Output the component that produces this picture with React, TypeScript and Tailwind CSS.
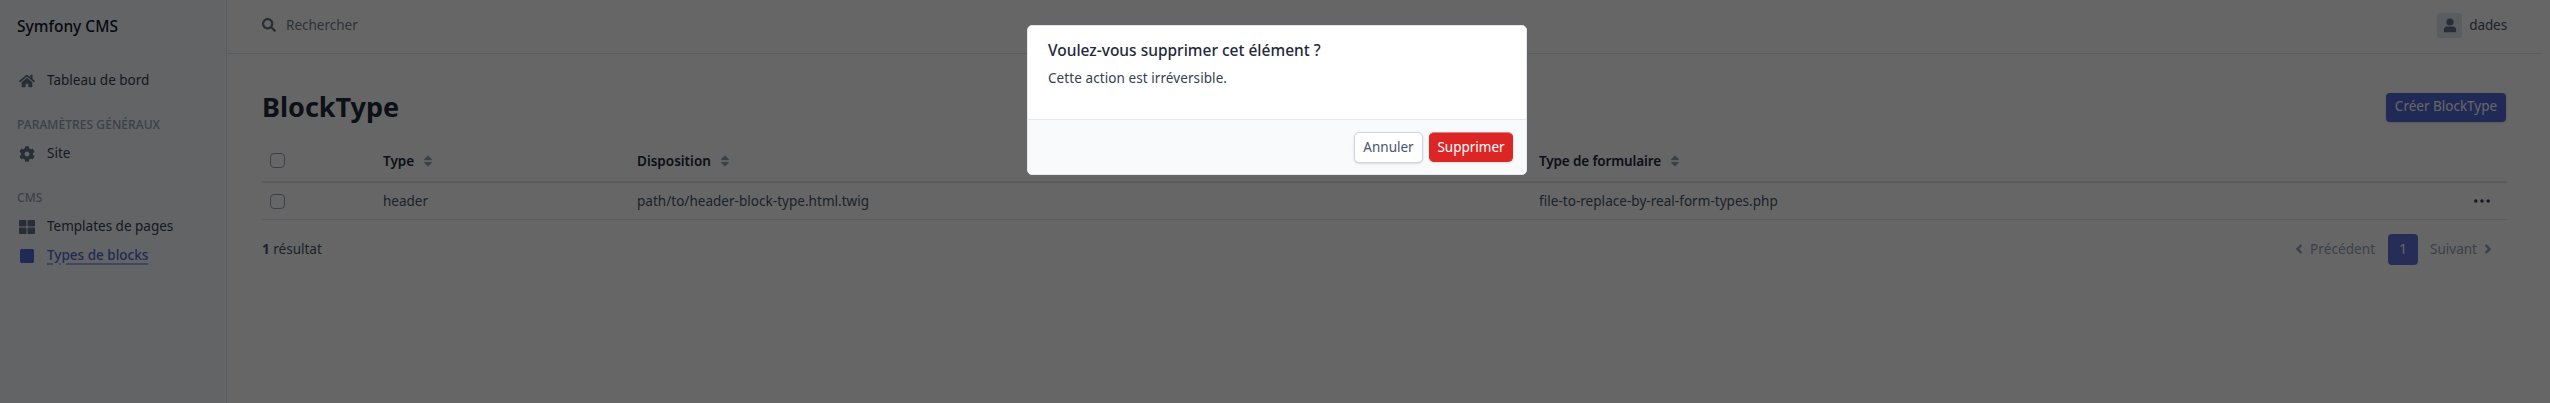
import type { ReactNode } from "react";
import {
  FaAngleLeft,
  FaAngleRight,
  FaCog,
  FaHome,
  FaSearch,
  FaSort,
  FaSquare,
  FaThLarge,
  FaUser,
} from "react-icons/fa";

function MenuItem({ icon, children, active = false }: { icon: ReactNode; children: ReactNode; active?: boolean }) {
  return (
    <li className={active ? "flex h-[29px] items-center font-medium text-[#5468d8]" : "flex h-[29px] items-center text-[#334155]"}>
      <span className={active ? "flex w-5 justify-center pt-px text-[16px]" : "flex w-5 justify-center pt-px text-[16px] text-[#64748b]"}>
        {icon}
      </span>
      <span
        className={
          active
            ? "mb-0.5 ml-[10px] underline decoration-[#a5b0ee] decoration-2 underline-offset-[3px]"
            : "mb-0.5 ml-[10px]"
        }
      >
        {children}
      </span>
    </li>
  );
}

function MenuSection({ children }: { children: ReactNode }) {
  return <li className="flex h-[29px] items-center text-[12px] font-medium tracking-[0.08px] text-[#94a3b8]">{children}</li>;
}

function Checkbox() {
  return <span className="ml-2 block size-[15px] rounded-[4px] border border-[#94a3b8] bg-white" />;
}

function Heading({ children, className = "" }: { children: ReactNode; className?: string }) {
  return (
    <div className="flex items-center font-semibold text-[#1e293b]">
      <span className={className}>{children}</span>
      <FaSort className="ml-[7px] text-[14px] text-[#94a3b8]" />
    </div>
  );
}

function Dots() {
  return (
    <svg viewBox="0 0 16 4" className="ml-[7px] h-1 w-4 fill-[#334155]">
      <circle cx="1.8" cy="2" r="1.75" />
      <circle cx="8" cy="2" r="1.75" />
      <circle cx="14.2" cy="2" r="1.75" />
    </svg>
  );
}

export default function App() {
  return (
    <div className="relative flex h-[403px] w-full overflow-hidden bg-white font-['Noto_Sans','Open_Sans',sans-serif] text-[13.5px] leading-5 text-[#475569]">
      <aside className="h-full w-[227px] shrink-0 border-r border-[#e2e8f0] bg-[#f8fafc] px-[17px]">
        <div className="flex h-[52px] items-center text-[15.5px] font-medium text-[#0f172a]">Symfony CMS</div>
        <ul className="pt-[14px]">
          <MenuItem icon={<FaHome />}>Tableau de bord</MenuItem>
          <li className="h-[15px]" />
          <MenuSection>PARAMÈTRES GÉNÉRAUX</MenuSection>
          <MenuItem icon={<FaCog />}>Site</MenuItem>
          <li className="h-[15px]" />
          <MenuSection>CMS</MenuSection>
          <MenuItem icon={<FaThLarge />}>Templates de pages</MenuItem>
          <MenuItem active icon={<FaSquare />}>
            Types de blocks
          </MenuItem>
        </ul>
      </aside>

      <div className="mr-2 min-w-0 flex-1">
        <header className="flex h-[54px] items-center justify-between border-b border-[#e2e8f0] px-[35px] pb-[3px]">
          <div className="flex items-center">
            <FaSearch className="text-[14px] text-[#64748b]" />
            <span className="ml-[10px] text-[#757f8e]">Rechercher</span>
          </div>
          <div className="flex items-center">
            <span className="flex size-[25px] items-center justify-center rounded-[3px] bg-[#e2e8f0]">
              <svg viewBox="0 0 14 15" className="h-[15px] w-[14px] fill-[#64748b]">
                <circle cx="7" cy="4" r="3.6" />
                <path d="M.8 13V12a3.6 3.6 0 0 1 3.6-3.6h5.2A3.6 3.6 0 0 1 13.200 12v1a1.300 1.300 0 0 1-1.300 1.300H2.100A1.300 1.300 0 0 1 .8 13Z" />
              </svg>
            </span>
            <span className="ml-[7px] tracking-[-0.1px]">dades</span>
          </div>
        </header>

        <main className="px-[35px]">
          <div className="flex h-[80px] items-center justify-between pt-[26px]">
            <h1 className="text-[27px] font-bold leading-[28px] text-[#1e293b]">BlockType</h1>
            <button className="mr-px flex h-[29px] w-[120px] items-center justify-center rounded-[4px] bg-[#5468d8] pb-0.5 text-white shadow-sm">
              Créer BlockType
            </button>
          </div>

          <div className="grid h-[49px] grid-cols-[121px_254px_902px_1fr] items-center border-b-2 border-[#e2e8f0] pb-px pt-[7px]">
            <Checkbox />
            <Heading>Type</Heading>
            <Heading>Disposition</Heading>
            <Heading className="tracking-[-0.13px]">Type de formulaire</Heading>
          </div>
          <div className="grid h-[37px] grid-cols-[121px_254px_902px_1fr_40px] items-center border-b border-[#e2e8f0]">
            <Checkbox />
            <span>header</span>
            <span className="tracking-[0.03px]">path/to/header-block-type.html.twig</span>
            <span className="tracking-[0.04px]">file-to-replace-by-real-form-types.php</span>
            <Dots />
          </div>

          <div className="flex h-[58px] items-center justify-between">
            <div>
              <strong className="font-bold">1</strong> résultat
            </div>
            <nav className="mr-[12px] flex items-center text-[#94a3b8]">
              <FaAngleLeft className="text-[14px]" stroke="currentColor" strokeWidth={16} />
              <span className="ml-1 tracking-[0.08px]">Précédent</span>
              <span className="mx-[13px] flex h-[31px] w-[30px] items-center justify-center rounded-[4px] bg-[#6072d8] text-white">
                1
              </span>
              <span className="-ml-px">Suivant</span>
              <FaAngleRight className="ml-1 text-[14px]" stroke="currentColor" strokeWidth={16} />
            </nav>
          </div>
        </main>
      </div>

      <div className="absolute inset-0 flex items-start justify-center bg-black/60 pt-[25px]">
        <div
          role="dialog"
          className="ml-1 flex h-[150px] w-[500px] flex-col overflow-hidden rounded-[5px] border border-[#e2e8f0] bg-white text-[#334155]"
        >
          <div className="flex-1 px-5 pt-[13px]">
            <h4 className="text-[15.5px] font-medium leading-[22px] text-[#1e293b]">
              Voulez-vous supprimer cet élément ?
            </h4>
            <p className="mt-[7px] tracking-[0.08px]">Cette action est irréversible.</p>
          </div>
          <div className="flex h-[55px] items-center justify-end gap-[6px] border-t border-[#e2e8f0] bg-[#f8fafc] pr-[13px]">
            <button className="flex h-[31px] w-[69px] items-center justify-center rounded-[5px] border border-[#cbd5e1] bg-white pb-px text-[#475569] shadow-sm">
              Annuler
            </button>
            <button className="flex h-[30px] w-[84px] items-center justify-center rounded-[5px] border border-[#dc2626] border-t-[#d5868e] bg-[#dc2626] pb-px text-white shadow-sm">
              Supprimer
            </button>
          </div>
        </div>
      </div>
    </div>
  );
}
